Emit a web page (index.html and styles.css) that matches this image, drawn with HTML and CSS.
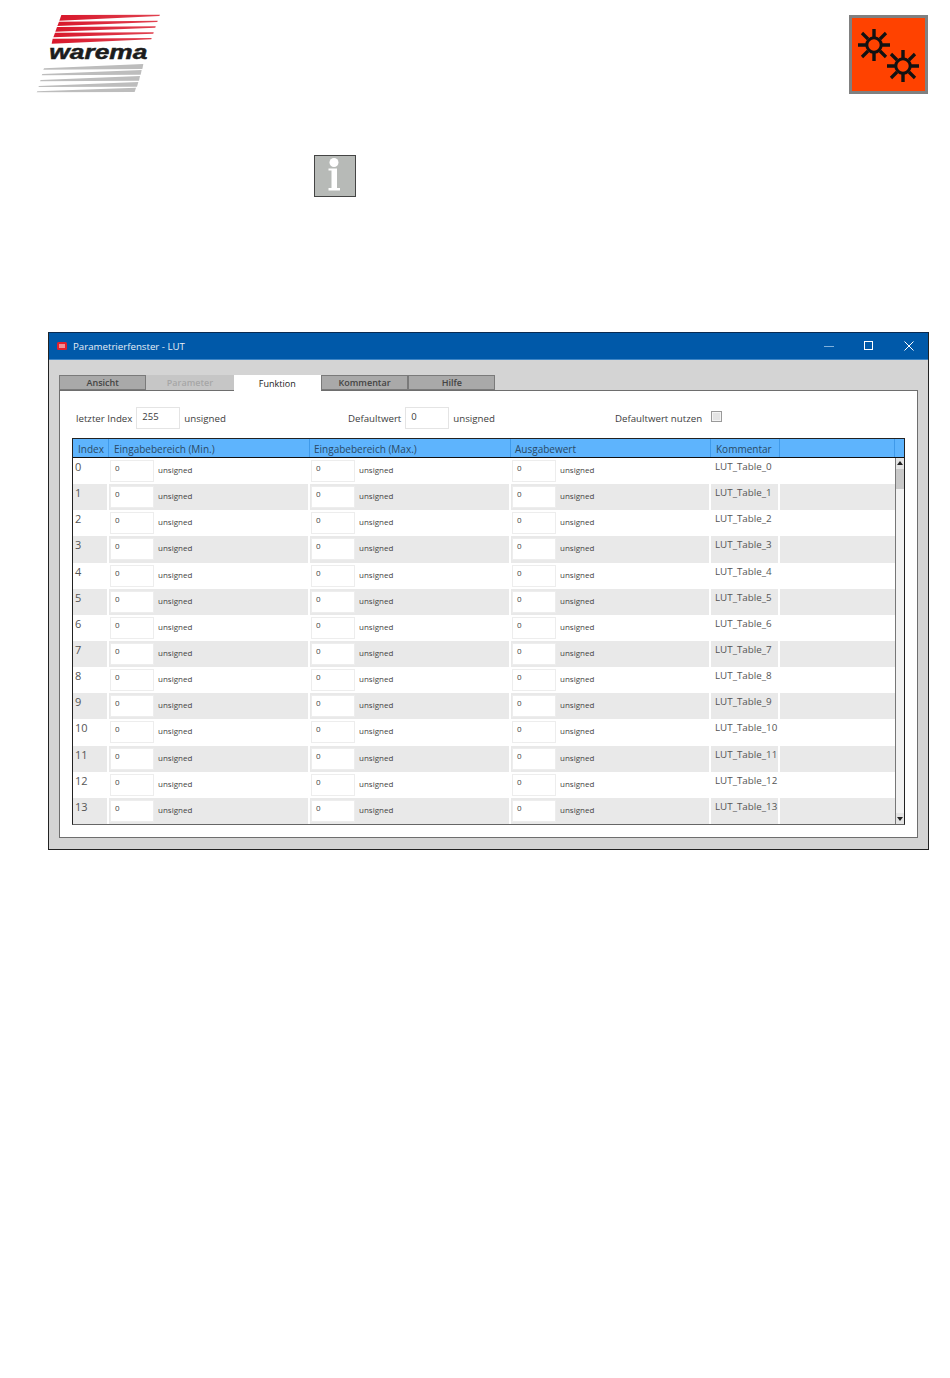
FILE: index.html
```html
<!DOCTYPE html>
<html lang="de">
<head>
<meta charset="utf-8">
<title>Parametrierfenster - LUT</title>
<link rel="stylesheet" href="styles.css">
</head>
<body>
<div class="page">
  <header class="top">
    <svg class="logo" viewBox="0 0 480 330" aria-label="warema">
      <defs>
        <linearGradient id="red" x1="0" x2="1" y1="0" y2="0">
          <stop offset="0" stop-color="#d8182c"/><stop offset="1" stop-color="#e0414f"/>
        </linearGradient>
      </defs>
      <g fill="url(#red)">
        <polygon points="124,45 420,44 418,48 118,62"/>
        <polygon points="117,65 413,62 412,66 112,78"/>
        <polygon points="111,81 407,79 406,83 106,95"/>
        <polygon points="105,98 401,97 400,101 100,112"/>
        <polygon points="98,116 395,114 394,118 95,131"/>
      </g>
      <text class="logo-text" x="88" y="178" textLength="294" lengthAdjust="spacingAndGlyphs">warema</text>
      <g fill="#bdbdbd">
        <polygon points="370,192 367,207 70,209 72,205"/>
        <polygon points="365,210 362,224 65,226 67,222"/>
        <polygon points="360,228 357,242 60,244 62,240"/>
        <polygon points="355,246 351,260 55,261 57,258"/>
        <polygon points="348,263 344,276 50,277 52,274"/>
      </g>
    </svg>
    <svg class="gears" viewBox="0 0 79 79" aria-hidden="true">
      <rect width="79" height="79" fill="#808080"/>
      <rect x="3" y="3" width="73" height="73" fill="#ff4200"/>
      <defs>
        <g id="gear" fill="none" stroke="#111">
          <circle r="7.2" stroke-width="3"/>
          <path d="M0-8V-16M0 8V16M-8 0H-16M8 0H16" stroke-width="3.4"/>
          <path d="M-6-6L-12-12M6-6L12-12M-6 6L-12 12M6 6L12 12" stroke-width="3.2"/>
        </g>
      </defs>
      <use href="#gear" x="25" y="30"/>
      <use href="#gear" x="54" y="51"/>
    </svg>
  </header>

  <svg class="info" viewBox="0 0 42 42" aria-hidden="true">
    <rect x=".5" y=".5" width="41" height="41" fill="#b7bab7" stroke="#444"/>
    <circle cx="20" cy="7.5" r="4.5" fill="#fff"/>
    <path d="M14.5 13.5H23V33H26V35.5H14.5V33H17.5V15.5H14.5Z" fill="#fff"/>
  </svg>

  <section class="window">
    <div class="titlebar">
      <svg class="appicon" viewBox="0 0 10 8" aria-hidden="true">
        <rect width="10" height="8" rx="1.5" fill="#e2202c"/>
        <path d="M2 3H8M2 5H8" stroke="#fff"/>
      </svg>
      <span class="title">Parametrierfenster - LUT</span>
      <div class="controls">
        <svg viewBox="0 0 10 10" aria-hidden="true"><path d="M0 5.5H10" stroke="#7fb0dc"/></svg>
        <svg viewBox="0 0 10 10" aria-hidden="true"><rect x=".5" y=".5" width="8" height="8" fill="none" stroke="#fff"/></svg>
        <svg viewBox="0 0 10 10" aria-hidden="true"><path d="M.5.5L9.5 9.5M9.5.5L.5 9.5" stroke="#fff"/></svg>
      </div>
    </div>
    <div class="client">
      <nav class="tabs">
        <span class="tab">Ansicht</span>
        <span class="tab tab-disabled">Parameter</span>
        <span class="tab tab-active">Funktion</span>
        <span class="tab">Kommentar</span>
        <span class="tab">Hilfe</span>
      </nav>
      <div class="panel">
        <div class="settings">
          <div class="setting"><span>letzter Index</span><span class="field">255</span><span>unsigned</span></div>
          <div class="setting"><span>Defaultwert</span><span class="field">0</span><span>unsigned</span></div>
          <div class="setting"><span>Defaultwert nutzen</span><span class="checkbox"></span></div>
        </div>
        <div class="table">
          <div class="row head">
            <span class="c-idx">Index</span><span class="c-val">Eingabebereich (Min.)</span><span class="c-val">Eingabebereich (Max.)</span><span class="c-val c-val3">Ausgabewert</span><span class="c-com">Kommentar</span><span class="c-fill"></span><span class="c-end"></span>
          </div>
          <div class="body">
            <div class="rows" id="rows"></div>
            <div class="scrollbar">
              <span class="arrow arrow-up"></span>
              <span class="thumb"></span>
              <span class="track"></span>
              <span class="arrow arrow-down"></span>
            </div>
          </div>
        </div>
      </div>
    </div>
  </section>
</div>
<script src="rows.js"></script>
</body>
</html>
```

FILE: styles.css
```css
* { box-sizing: border-box; }
html, body { margin: 0; background: #fff; }
body { font-family: "Open Sans", "Noto Sans", sans-serif; color: #333; }
.page { height: 1378px; overflow: hidden; }

.top { display: flex; justify-content: space-between; align-items: flex-start; height: 110px; padding: 15px 22px 0 20px; }
.logo { width: 160px; height: 110px; margin-top: -15px; }
.logo-text { font-family: "Liberation Sans", sans-serif; font-weight: 700; font-style: italic; font-size: 62px; fill: #1c1c1c; stroke: #1c1c1c; stroke-width: 1.5px; }
.gears { width: 79px; height: 79px; }

.info { display: block; width: 42px; height: 42px; margin: 45px 0 0 314px; }

.window { width: 881px; height: 518px; margin: 135px 0 0 48px; border: 1px solid #222; border-top-color: #0a2a50; display: flex; flex-direction: column; background: #d4d4d4; }
.titlebar { height: 27px; background: #0059a9; color: #e6eef6; display: flex; align-items: center; padding-left: 8px; border-bottom: 1px solid #3f86c6; flex: none; }
.appicon { width: 10px; height: 8px; margin-right: 6px; }
.title { font-size: 9.7px; }
.controls { margin-left: auto; display: flex; gap: 30px; padding-right: 14px; }
.controls svg { width: 10px; height: 10px; display: block; }

.client { flex: 1; padding: 15px 10px 11px 10px; display: flex; flex-direction: column; }
.tabs { display: flex; height: 16px; flex: none; margin-bottom: -1px; position: relative; z-index: 1; }
.tab { width: 87.3px; height: 15px; background: #a9a9a9; border: 1px solid #7a7a7a; font-size: 9px; font-weight: 600; color: #444; text-align: center; line-height: 13px; }
.tab-disabled { background: #c6c6c6; border-color: #c6c6c6; color: #a6a6a6; }
.tab-active { background: #fff; border-color: #fff; height: 16px; line-height: 15px; font-weight: 400; color: #222; }
.panel { flex: 1; background: #fff; border: 1px solid #6e6e6e; padding: 16px 12px 12px 12px; display: flex; flex-direction: column; }

.settings { display: grid; grid-template-columns: 272px 267px 1fr; height: 31px; padding-left: 4px; flex: none; font-size: 9.7px; color: #3c3c3c; }
.setting { display: flex; align-items: center; gap: 4px; height: 22px; }
.field { width: 44px; height: 22px; border: 1px solid #e4e4e4; padding: 1px 0 0 5px; font-size: 9.5px; line-height: 16px; align-self: flex-start; }
.checkbox { width: 11px; height: 11px; margin: -3px 0 0 5px; border: 1px solid #9a9a9a; background: #e4e4e4; box-shadow: inset 0 0 0 1px #f4f4f4; }

.table { flex: 1; border: 1px solid #222; border-bottom-color: #666; display: flex; flex-direction: column; }
.row { display: flex; }
.head { height: 19px; background: #5eb4fd; border-bottom: 1px solid #111; color: #2a4a66; font-size: 10px; line-height: 20px; flex: none; }
.head > span { padding-left: 5px; border-right: 1px solid #3f9aea; }
.head .c-val + .c-val { padding-left: 4px; }
.c-idx { width: 36px; flex: none; }
.c-val { width: 201px; flex: none; }
.c-val3 { width: 200px; }
.c-com { width: 69px; flex: none; }
.c-fill { flex: 1; }
.head .c-end { width: 9px; flex: none; padding: 0; border-right: 0; }

.body { flex: 1; display: flex; min-height: 0; }
.rows { flex: 1; display: flex; flex-direction: column; }
.data { flex: 1; font-size: 9.8px; color: #555; }
.data:nth-child(even) { background: #e9e9e9; }
.data:nth-child(even) .c-idx,
.data:nth-child(even) .c-val,
.data:nth-child(even) .c-com { border-right: 2px solid #fff; }
.data .c-idx { padding: 1px 0 0 2px; font-size: 11px; }
.data .c-com { padding: 2px 0 0 4px; }
.data .c-val { display: flex; align-items: flex-start; gap: 4px; padding: 2px 0 0 1px; font-size: 8px; color: #444; }
.cell-input { width: 44px; height: 22px; flex: none; background: #fff; border: 1px solid #ededed; padding: 0 0 0 4px; line-height: 13px; }
.unit { margin-top: 4px; }

.scrollbar { width: 9px; flex: none; display: flex; flex-direction: column; background: #f0f0f0; border-left: 1px solid #777; }
.arrow { height: 11px; flex: none; background: #e4e4e4; position: relative; }
.arrow::after { content: ""; position: absolute; left: 1px; border-left: 3px solid transparent; border-right: 3px solid transparent; }
.arrow-up::after { top: 3px; border-bottom: 4px solid #222; }
.arrow-down::after { top: 4px; border-top: 4px solid #222; }
.thumb { height: 20px; flex: none; background: #c8c8c8; }
.track { flex: 1; background: #f2f2f2; }
```

FILE: rows.js
```js
var host = document.getElementById('rows');
var unit = '<span class="c-val%"><span class="cell-input">0</span><span class="unit">unsigned</span></span>';
var html = '';
for (var i = 0; i < 14; i++) {
  html += '<div class="row data"><span class="c-idx">' + i + '</span>' +
    unit.replace('%', '') + unit.replace('%', '') + unit.replace('%', ' c-val3') +
    '<span class="c-com">LUT_Table_' + i + '</span></div>';
}
host.innerHTML = html;
```
